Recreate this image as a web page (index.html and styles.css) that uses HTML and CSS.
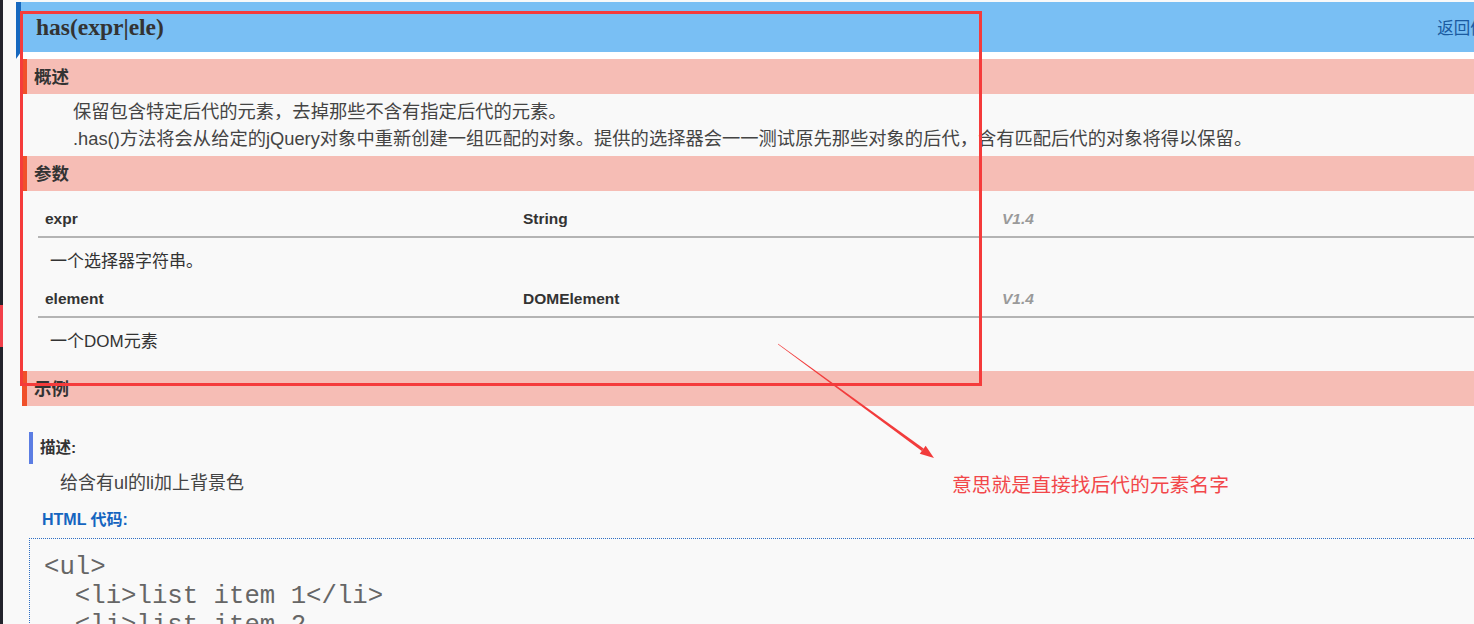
FILE: index.html
```html
<!DOCTYPE html>
<html lang="zh-CN">
<head>
<meta charset="utf-8">
<title>has(expr|ele)</title>
<link rel="stylesheet" href="styles.css">
</head>
<body>
<div class="app">
  <aside class="rail">
    <div class="rail-top"></div>
    <div class="rail-mark"></div>
    <div class="rail-bottom"></div>
  </aside>
  <main class="doc">
    <header class="doc-head">
      <h2 class="doc-title">has(expr|ele)</h2>
      <span class="ret">返回值:jQuery</span>
    </header>

    <section class="sec">
      <h3 class="sec-title">概述</h3>
      <div class="desc">
        <p>保留包含特定后代的元素，去掉那些不含有指定后代的元素。</p>
        <p>.has()方法将会从给定的jQuery对象中重新创建一组匹配的对象。提供的选择器会一一测试原先那些对象的后代，含有匹配后代的对象将得以保留。</p>
      </div>
    </section>

    <section class="sec">
      <h3 class="sec-title">参数</h3>
      <div class="params">
        <div class="param-head">
          <span class="p-name">expr</span>
          <span class="p-type">String</span>
          <span class="p-ver">V1.4</span>
        </div>
        <div class="param-desc">一个选择器字符串。</div>
        <div class="param-head">
          <span class="p-name">element</span>
          <span class="p-type">DOMElement</span>
          <span class="p-ver">V1.4</span>
        </div>
        <div class="param-desc">一个DOM元素</div>
      </div>
    </section>

    <section class="sec">
      <h3 class="sec-title">示例</h3>
      <div class="example">
        <h4 class="ex-label">描述:</h4>
        <p class="ex-text">给含有ul的li加上背景色</p>
        <h5 class="code-label">HTML 代码:</h5>
        <pre class="code">&lt;ul&gt;
  &lt;li&gt;list item 1&lt;/li&gt;
  &lt;li&gt;list item 2
</pre>
      </div>
    </section>
  </main>

  <div class="mark-box"></div>
  <svg class="mark-arrow" width="1474" height="624" viewBox="0 0 1474 624">
    <polygon points="777.85,344.2 778.15,343.8 923.6,448.5 921.8,450.9" fill="#f23c3c"/>
    <polygon points="934,458 919.75,453.74 925.65,445.66" fill="#f23c3c"/>
  </svg>
  <div class="mark-note">意思就是直接找后代的元素名字</div>
</div>
</body>
</html>
```

FILE: styles.css
```css
html, body {
  margin: 0;
  padding: 0;
}
body {
  width: 1474px;
  height: 624px;
  overflow: hidden;
  background: #f9f9f9;
  font-family: "Liberation Sans", "Noto Sans CJK SC", sans-serif;
  color: #444;
}
.app {
  position: relative;
  display: flex;
  gap: 13px;
  height: 624px;
}
.rail {
  width: 3px;
  flex-shrink: 0;
  display: flex;
  flex-direction: column;
}
.rail-top { height: 305px; background: #23242c; }
.rail-mark { height: 42px; background: #f2404a; }
.rail-bottom { flex: 1; background: #23242c; }

.doc {
  width: 1560px;
  flex-shrink: 0;
  padding-top: 2px;
}
.doc-head {
  height: 50px;
  display: flex;
  align-items: center;
  background: #79bff4;
  border-left: 5px solid #1668bf;
  padding-left: 15px;
  border-bottom: 7px solid #ffffff;
}
.doc-title {
  margin: 0;
  font-family: "Liberation Serif", "Noto Sans CJK SC", serif;
  font-weight: bold;
  font-size: 23.5px;
  color: #333;
  padding-top: 1px;
}
.ret {
  margin-left: auto;
  padding-right: 36px;
  font-size: 16.5px;
  color: #1a5aa0;
}

.sec-title {
  margin: 0 0 0 6px;
  height: 35px;
  line-height: 36px;
  background: #f6bdb5;
  border-left: 5px solid #f0502a;
  padding-left: 7px;
  font-size: 17.5px;
  font-weight: bold;
  color: #333;
}
.desc {
  padding: 3px 0;
}
.desc p {
  margin: 0 0 0 57px;
  line-height: 28px;
  font-size: 18.3px;
  color: #444;
  white-space: nowrap;
}
.desc p:first-child {
  padding-top: 1px;
  margin-bottom: -1px;
}

.params {
  margin: 11px 0 9px 22px;
  width: 1500px;
}
.param-head {
  display: grid;
  grid-template-columns: 478px 479px 1fr;
  height: 34px;
  align-items: center;
  border-bottom: 2px solid #b4b4b4;
  font-size: 15.5px;
  font-weight: bold;
  color: #333;
}
.param-head span {
  padding-left: 7px;
  padding-top: 0;
}
.p-ver {
  font-style: italic;
  color: #9a9a9a;
}
.param-desc {
  height: 44px;
  line-height: 44px;
  padding-left: 12px;
  padding-top: 2px;
  box-sizing: border-box;
  font-size: 17px;
  color: #333;
}

.example {
  padding-left: 13px;
}
.ex-label {
  margin: 26px 0 0 0;
  height: 32px;
  line-height: 32px;
  border-left: 4px solid #5b7de3;
  padding-left: 7px;
  font-size: 15.5px;
  font-weight: bold;
  color: #333;
}
.ex-text {
  margin: 5px 0 0 31px;
  line-height: 28px;
  font-size: 18px;
  color: #444;
}
.code-label {
  margin: 11px 0 0 13px;
  line-height: 24px;
  font-size: 16px;
  font-weight: bold;
  color: #1565c0;
}
.code {
  margin: 6px 0 0 0;
  padding: 14px 14px;
  border: 1px dotted #2f6fc4;
  font-family: "Liberation Mono", monospace;
  font-size: 25.7px;
  line-height: 29px;
  color: #666;
  font-weight: normal;
}

.mark-box {
  position: absolute;
  left: 20px;
  top: 11px;
  width: 956px;
  height: 369px;
  border: 3px solid #f53b3b;
  pointer-events: none;
}
.mark-arrow {
  position: absolute;
  left: 0;
  top: 0;
  pointer-events: none;
}
.mark-note {
  position: absolute;
  left: 952px;
  top: 470px;
  font-family: "Noto Sans CJK SC", sans-serif;
  font-size: 19.8px;
  line-height: 28px;
  color: #f2474a;
  white-space: nowrap;
}
```
